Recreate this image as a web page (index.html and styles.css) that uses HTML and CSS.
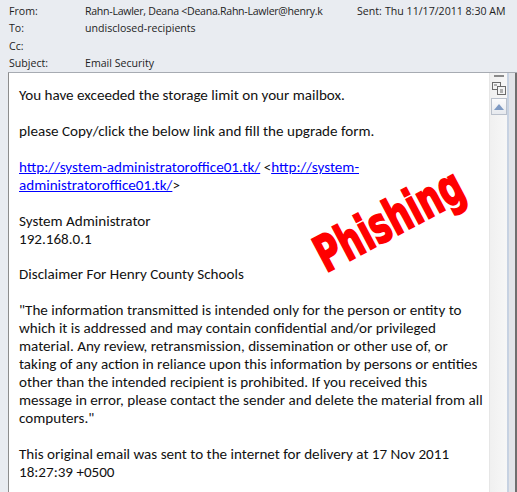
FILE: index.html
```html
<!DOCTYPE html>
<html>
<head>
<meta charset="utf-8">
<link rel="stylesheet" href="styles.css">
</head>
<body>
<div class="window">
  <div class="header">
    <div class="row"><span class="label">From:</span><span class="value from">Rahn-Lawler, Deana &lt;Deana.Rahn-Lawler@henry.k</span><span class="label sent">Sent:</span><span class="value">Thu 11/17/2011 8:30 AM</span></div>
    <div class="row"><span class="label">To:</span><span class="value">undisclosed-recipients</span></div>
    <div class="row"><span class="label">Cc:</span><span class="value"></span></div>
    <div class="row"><span class="label">Subject:</span><span class="value">Email Security</span></div>
  </div>
  <div class="main">
    <div class="content">
      <p>You have exceeded the storage limit on your mailbox.</p>
      <p>please Copy/click the below link and fill the upgrade form.</p>
      <p><a href="#">http://system-administratoroffice01.tk/</a> &lt;<a href="#">http://system-</a><br><a href="#">administratoroffice01.tk/</a>&gt;</p>
      <p>System Administrator<br>192.168.0.1</p>
      <p>Disclaimer For Henry County Schools</p>
      <p>"The information transmitted is intended only for the person or entity to<br>which it is addressed and may contain confidential and/or privileged<br>material. Any review, retransmission, dissemination or other use of, or<br>taking of any action in reliance upon this information by persons or entities<br>other than the intended recipient is prohibited. If you received this<br>message in error, please contact the sender and delete the material from all<br>computers."</p>
      <p>This original email was sent to the internet for delivery at 17 Nov 2011<br>18:27:39 +0500</p>
      <div class="stamp">Phishing</div>
    </div>
    <div class="scroll">
      <div class="dash"></div>
      <svg class="ico" width="14" height="13" viewBox="0 0 14 13">
        <rect x="0.5" y="0.5" width="8" height="7" fill="#f4f4f4" stroke="#6b6b6b"/>
        <rect x="5.5" y="4.5" width="8" height="8" fill="#f4f4f4" stroke="#6b6b6b"/>
        <path d="M2 3h3M8 8h3M8 10h3" stroke="#6b6b6b" stroke-width="1"/>
      </svg>
      <div class="upbtn"><svg width="10" height="6" viewBox="0 0 10 6"><path d="M0 6L5 0L10 6Z" fill="#7f9ac3"/></svg></div>
    </div>
    <div class="edge"></div>
  </div>
</div>
</body>
</html>
```
FILE: styles.css
```css
html, body {
  margin: 0;
  padding: 0;
}
body {
  width: 517px;
  height: 492px;
  overflow: hidden;
  background: #e9ecf1;
}
.window {
  display: flex;
  flex-direction: column;
  height: 492px;
}
.header {
  padding: 3px 0 0 9px;
  font-family: "Open Sans", "Noto Sans", sans-serif;
  font-size: 10.6px;
  color: #1e1e1e;
  height: 72px;
  box-sizing: border-box;
  flex: none;
}
.row {
  display: flex;
  height: 17.3px;
  line-height: 17.3px;
  white-space: nowrap;
}
.label {
  width: 76px;
  flex: none;
}
.from {
  width: 266px;
  overflow: hidden;
  flex: none;
  letter-spacing: -0.28px;
}
.label.sent {
  width: 28px;
  margin-left: 6px;
}
.main {
  flex: 1;
  display: flex;
  margin-left: 8px;
  border-left: 1px solid #8d8d8d;
  border-top: 1px solid #a7abb2;
  min-height: 0;
}
.content {
  position: relative;
  flex: 1;
  background: #ffffff;
  padding: 14px 0 0 10px;
  font-family: Carlito, "Lato", "Open Sans", sans-serif;
  font-size: 15.1px;
  line-height: 17.95px;
  color: #111;
  white-space: nowrap;
  overflow: hidden;
}
.content p {
  margin: 0 0 17.95px 0;
}
.content a {
  color: #0000ff;
  text-decoration: underline;
}
.stamp {
  position: absolute;
  left: 380px;
  top: 147px;
  font-family: "Liberation Sans Narrow", "DejaVu Sans Condensed", sans-serif;
  font-weight: bold;
  font-size: 46px;
  line-height: 1;
  color: #ff0000;
  -webkit-text-stroke: 1.8px #ff0000;
  transform: translate(-50%, -50%) rotate(-28deg) scale(0.8, 1.08);
  transform-origin: center;
}
.scroll {
  width: 17px;
  flex: none;
  background: linear-gradient(to right, #f0f0f0, #f7f7f7);
  border-left: 1px solid #e6e6e6;
  display: flex;
  flex-direction: column;
  align-items: center;
  padding-top: 2px;
}
.dash {
  width: 10px;
  height: 2px;
  background: #8a8a8a;
  margin: 0 0 5px 0;
}
.ico {
  display: block;
  margin-bottom: 3px;
}
.upbtn {
  width: 14px;
  height: 15px;
  border: 1px solid #b9c0cb;
  background: linear-gradient(#fbfbfc, #e6e9ee);
  display: flex;
  align-items: center;
  justify-content: center;
}
.edge {
  width: 8px;
  flex: none;
  border-left: 2px solid #c7d2e2;
  background: #e2e4e8;
  box-shadow: inset -2px 0 0 #6f6f6f;
}
```
